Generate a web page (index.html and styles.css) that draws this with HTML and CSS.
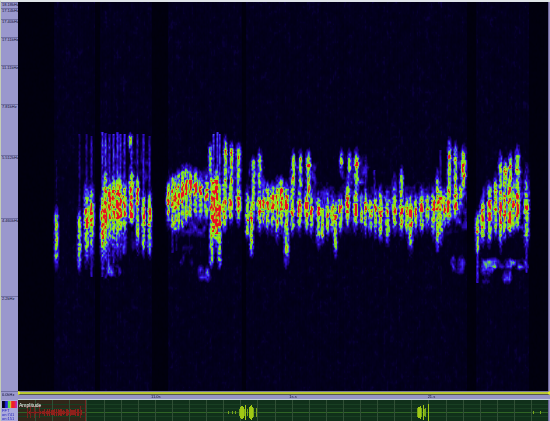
FILE: index.html
```html
<!DOCTYPE html>
<html lang="en">
<head>
<meta charset="utf-8">
<title>Spectrogram</title>
<link rel="stylesheet" href="styles.css">
</head>
<body>
<main class="app">
  <section class="spectrum">
    <div class="frequency-axis">
      <span class="tick" style="flex-grow:5">18.18kHz</span>
      <span class="tick" style="flex-grow:10">17.14kHz</span>
      <span class="tick" style="flex-grow:18">17.40kHz</span>
      <span class="tick" style="flex-grow:27">17.11kHz</span>
      <span class="tick" style="flex-grow:39">11.11kHz</span>
      <span class="tick" style="flex-grow:51">7.81kHz</span>
      <span class="tick" style="flex-grow:64">5.512kHz</span>
      <span class="tick" style="flex-grow:79">4.460kHz</span>
      <span class="tick" style="flex-grow:96">2.2kHz</span>
    </div>
    <canvas class="plot" id="spectrogram" width="530" height="389" aria-label="Spectrogram"></canvas>
    <div class="edge"></div>
  </section>
  <section class="timeline">
    <span class="origin">0.0kHz</span>
    <div class="time">
      <div class="range"></div>
      <div class="ruler"><span></span><span>11.0s</span><span>1s.s</span><span>21.s</span></div>
    </div>
  </section>
  <section class="overview">
    <div class="legend">
      <div class="palette"></div>
      <span>FFT</span>
      <span>on:741</span>
      <span>on:151</span>
    </div>
    <div class="amplitude">
      <canvas class="wave" id="waveform" width="530" height="21" aria-label="Amplitude overview"></canvas>
      <span class="caption">Amplitude</span>
    </div>
    <div class="edge"></div>
  </section>
</main>
<script src="script.js"></script>
</body>
</html>
```
FILE: styles.css
```css
* { box-sizing: border-box; }
body {
  margin: 0;
  background: #9a98cd;
  font-family: "Liberation Sans", sans-serif;
  font-size: 4px;
  line-height: 4px;
  color: #101034;
}
.app {
  height: 100vh;
  display: grid;
  grid-template-rows: 1fr 9px 21px;
  border-top: 2px solid #dfe4e8;
  border-left: 1px solid #c6cfb8;
  overflow: hidden;
}
.spectrum, .timeline, .overview {
  display: grid;
  grid-template-columns: 17px 1fr 2px;
  min-height: 0;
}
.frequency-axis {
  display: flex;
  flex-direction: column;
  min-height: 0;
  background: #9a98cd;
}
.tick {
  flex-basis: 0;
  min-height: 0;
  border-top: 1px solid #706fa2;
  padding-left: 1px;
  white-space: nowrap;
}
.plot, .wave {
  display: block;
  width: 100%;
  height: 100%;
  min-height: 0;
}
.edge { background: #9a91c6; border-left: 1px solid #6c6598; }
.timeline { grid-template-columns: 17px 1fr; }
.origin { padding: 1px; border-top: 1px solid #706fa2; }
.time { display: grid; grid-template-rows: 4px 5px; }
.range {
  background: #b9c832;
  border-top: 1px solid #77759f;
  border-bottom: 1px solid #55584d;
  border-left: 2px solid #e2ec28;
  border-right: 2px solid #e2ec28;
}
.ruler {
  display: grid;
  grid-template-columns: 25% 26% 26% 23%;
  border-bottom: 1px solid #c5d4dd;
  background: #9694c5;
}
.legend {
  display: flex;
  flex-direction: column;
  padding: 1px 1px 0;
  background: #aaa9dd;
  color: #2020bb;
}
.palette {
  flex: 0 0 7px;
  margin-bottom: 1px;
  background: linear-gradient(90deg, #05051a 0 15%, #2622e6 25% 35%, #55d846 43% 50%, #d4c634 56%, #ee2228 65% 80%, #ba2ad0);
}
.amplitude { position: relative; min-width: 0; }
.caption { position: absolute; top: 3px; left: 1px; color: #ffffff; font-size: 5px; }
```
FILE: script.js
```js
// Small seeded generator keeps the signal texture stable between paints.
let seed = 7351;
function random() {
  seed = (seed * 1664525 + 1013904223) >>> 0;
  return seed / 4294967296;
}

const LEFT = 18;
const TOP = 2;

// x, half width, outer top, strong top, peak top, peak bottom, strong bottom, outer bottom
const pulses = [
  [56,1,205,215,0,0,256,270],[79,1,207,216,0,0,260,272],
  [86,2,180,197,208,228,245,266],[91,2,180,194,203,225,236,265],
  [102,1,190,198,205,238,247,268],[105,2,160,177,187,228,246,265],
  [109,2,172,185,192,218,230,258],[113,2,170,183,190,220,228,262],
  [117,2,170,184,190,218,228,258],[120,2,170,185,193,217,226,255],
  [124,2,176,188,196,216,224,245],
  [130,1,132,136,0,0,145,152],[131,2,163,174,181,217,221,226],[137,1,173,181,188,204,234,252],
  [143,1,188,197,207,225,244,256],[149,1,186,198,208,226,246,258],
  [168,1,178,187,192,204,214,228],[172,1,172,180,189,207,226,233],
  [175,1,172,179,187,208,228,234],[178,1,168,175,186,204,226,233],
  [182,1,164,172,180,202,224,230],[186,2,163,172,180,194,217,225],
  [190,1,164,174,180,192,214,222],[195,2,167,175,182,195,211,220],
  [200,2,170,180,186,197,210,222],[206,2,172,182,189,200,210,224],
  [210,1,142,149,0,0,170,180],[211,1,170,180,201,210,262,268],
  [213,2,170,179,182,231,236,245],[216,2,165,176,180,233,238,250],
  [219,1,172,186,201,225,260,270],[224,2,170,184,200,218,224,232],
  [225,1,134,145,150,154,190,215],[231,1,140,148,152,155,202,216],
  [230,2,178,190,199,209,216,226],[238,2,140,150,0,0,170,215],[238,2,178,190,196,210,215,226],
  [247,1,185,196,214,220,232,240],[251,1,192,204,210,218,248,258],
  [253,1,155,161,0,0,203,233],[259,2,148,160,0,0,176,212],
  [259,2,185,195,200,214,222,234],[263,1,184,195,200,208,219,231],
  [267,2,180,190,197,209,221,234],[272,2,180,188,195,208,219,234],
  [277,2,177,188,194,210,229,242],[281,2,175,182,187,211,220,234],
  [286,2,180,189,195,208,252,267],[292,2,165,177,208,215,226,236],
  [293,1,149,158,0,0,178,190],[299,2,180,196,201,216,222,235],
  [300,1,148,158,0,0,186,196],[308,2,148,158,164,166,194,211],
  [306,2,180,195,202,216,224,234],[311,1,185,198,206,214,227,237],
  [318,2,190,200,207,215,235,248],[322,1,198,209,0,0,235,244],
  [327,1,185,203,209,217,226,239],[332,2,190,201,206,215,225,234],
  [335,1,195,205,214,219,244,257],[340,2,190,199,205,212,224,235],
  [341,1,148,158,0,0,163,175],[347,2,177,188,195,212,221,230],
  [349,1,149,158,0,0,168,179],[355,2,185,194,203,215,222,233],
  [356,2,147,158,162,165,180,201],[361,1,190,200,0,0,219,231],
  [365,1,184,198,202,209,224,237],[370,2,194,202,209,216,224,235],
  [375,1,188,200,204,211,226,239],[380,2,184,195,207,216,230,243],
  [387,2,187,199,207,216,234,245],[394,2,174,193,204,214,223,235],
  [401,1,166,175,0,0,196,230],[401,2,187,200,205,213,224,237],
  [406,1,194,202,207,214,225,236],[410,2,192,200,206,226,240,254],
  [415,1,192,201,207,214,225,235],[421,2,184,196,203,211,225,235],
  [427,2,186,196,204,209,220,231],[433,2,184,196,200,210,226,239],
  [437,1,168,181,199,211,239,253],[440,2,180,192,197,210,230,246],
  [444,1,184,196,205,212,219,231],[449,1,137,147,155,158,200,217],
  [448,2,180,189,201,216,219,227],[455,1,141,151,157,160,191,206],
  [455,2,178,188,194,209,213,221],[460,1,180,190,0,0,204,212],
  [463,2,144,153,160,176,183,201],[477,1,210,218,227,232,249,256],
  [482,2,196,205,209,228,236,246],[489,2,180,189,200,220,233,247],
  [495,1,173,184,190,214,228,238],[500,1,150,162,202,223,235,251],
  [504,1,163,174,195,215,231,241],[509,2,171,183,187,228,230,237],
  [505,2,158,166,168,171,179,201],[510,1,150,159,165,168,181,198],
  [517,2,144,155,169,174,184,199],[517,2,178,187,193,216,225,232],
  [513,1,174,187,201,211,224,234],[526,2,165,192,199,213,235,250]
];

// Faint vertical traces above and below the main calls: x, top, bottom, strength.
const traces = [
  [56,160,200,.22],[79,134,205,.28],[86,134,195,.32],[91,136,195,.36],
  [102,132,190,.42],[105,133,178,.46],[109,134,185,.4],[113,134,184,.44],
  [117,132,184,.46],[120,134,185,.42],[124,134,190,.42],[131,134,170,.44],
  [137,134,182,.36],[143,134,197,.42],[149,136,197,.38],
  [213,134,180,.44],[217,132,178,.46],[219,134,182,.46],
  [91,236,276,.38],[102,240,276,.42],[108,228,268,.42],[113,228,262,.38],
  [172,228,252,.34],[176,228,250,.26],[189,222,262,.2],[477,240,282,.42],
  [526,240,272,.4],[440,150,185,.34],[365,160,195,.36],[374,170,200,.34]
];

// Quiet spread and low-frequency echoes: left, right, top, bottom, strength.
const haze = [
  [100,127,128,205,.32],[128,151,130,205,.28],[99,122,260,283,.52],
  [84,95,130,205,.22],[84,95,240,274,.32],
  [100,128,215,272,.42],[128,151,215,265,.3],
  [165,230,155,230,.4],[207,224,130,195,.3],[224,242,136,232,.42],
  [196,212,261,285,.55],[168,208,205,243,.38],[176,195,235,276,.28],
  [245,268,145,245,.38],[262,470,172,245,.42],[288,318,148,200,.38],
  [338,370,146,200,.42],[443,468,138,215,.4],[448,468,250,278,.44],
  [478,528,170,250,.42],[495,524,146,200,.44],[477,530,255,272,.56],
  [478,496,256,276,.48],[480,491,266,287,.52],[500,513,264,287,.52]
];
const silences = [[18,53],[95,99],[152,167],[242,245],[467,475],[529,548]];

function pulseLevel(p, x, y) {
  const distance = Math.abs(x - p[0]);
  if (distance > 4 || y < p[2] - 3 || y > p[7] + 3) return 0;
  let level;
  if (p[4] && y >= p[4] && y <= p[5]) level = .96;
  else if (y >= p[3] && y <= p[6]) level = .72;
  else if (y < p[3]) level = .26 + .4 * (y - p[2]) / Math.max(1, p[3] - p[2]);
  else level = .26 + .4 * (p[7] - y) / Math.max(1, p[7] - p[6]);
  const falloff = p[1] === 2 ? [1, .91, .68, .46, .25] : [1, .86, .56, .32, .15];
  return Math.max(0, level) * falloff[distance];
}

function color(v) {
  const stops = [[0,0,0,8],[.15,3,0,32],[.3,31,5,135],[.44,58,25,249],[.53,78,125,210],[.6,109,216,45],[.77,165,235,20],[.85,197,130,25],[.92,228,20,36],[1.3,244,0,36]];
  for (let i = 1; i < stops.length; i++) {
    if (v <= stops[i][0]) {
      const a = stops[i - 1], b = stops[i];
      const t = (v - a[0]) / (b[0] - a[0]);
      return [1,2,3].map(n => a[n] + (b[n] - a[n]) * t);
    }
  }
  return [244,0,36];
}

// Value noise whose cells are sx by sy pixels, blended between cell corners.
function noiseField(w, h, sx, sy) {
  const cols = Math.ceil(w / sx) + 2;
  const rows = Math.ceil(h / sy) + 2;
  const cells = Array.from({length: cols * rows}, () => random());
  return (x, y) => {
    const gx = Math.floor(x / sx), gy = Math.floor(y / sy);
    const tx = x / sx - gx, ty = y / sy - gy;
    const at = (i, j) => cells[(gy + j) * cols + gx + i];
    return (at(0,0) * (1 - tx) + at(1,0) * tx) * (1 - ty)
      + (at(0,1) * (1 - tx) + at(1,1) * tx) * ty;
  };
}

function drawSpectrogram() {
  const canvas = document.getElementById("spectrogram");
  const ctx = canvas.getContext("2d");
  const w = canvas.width, h = canvas.height;
  const image = ctx.createImageData(w, h);
  const columns = Array.from({length: w}, () => random());
  const blobs = noiseField(w, h, 3, 5);
  const grain = noiseField(w, h, 1.4, 2.2);
  for (let py = 0; py < h; py++) {
    for (let px = 0; px < w; px++) {
      const x = px + LEFT, y = py + TOP;
      const n = grain(px, py);
      const b = blobs(px, py);
      const quiet = silences.some(s => x >= s[0] && x <= s[1]);
      let v = quiet ? .02 + n * .035 : .05 + b * .07 + n * .06 + columns[px] * .025;
      if (!quiet) {
        for (const a of haze) {
          if (x >= a[0] && x <= a[1] && y >= a[2] && y <= a[3]) {
            const dy = Math.min(y - a[2], a[3] - y) / ((a[3] - a[2]) / 2);
            const dx = Math.min(x - a[0], a[1] - x) + 1;
            const edge = Math.min(1, dy * 1.5) * Math.min(1, dx / 5);
            v = Math.max(v, a[4] * edge * (b * 1.05 + n * .35));
          }
        }
        for (const t of traces) {
          const distance = Math.abs(x - t[0]);
          if (distance < 3 && y >= t[1] && y <= t[2]) {
            v = Math.max(v, t[3] * [1, .75, .35][distance] * (.55 + n * .5 + b * .3));
          }
        }
      }
      let first = 0, second = 0;
      for (const p of pulses) {
        const level = pulseLevel(p, x, y);
        if (level > first) { second = first; first = level; }
        else if (level > second) second = level;
      }
      if (first) {
        const level = Math.min(.97, first + second * .08);
        v = Math.max(v, level * (.5 + n * .74 + b * .14));
      }
      const rgb = color(v), i = (py * w + px) * 4;
      image.data[i] = rgb[0];
      image.data[i + 1] = rgb[1];
      image.data[i + 2] = rgb[2];
      image.data[i + 3] = 255;
    }
  }
  ctx.putImageData(image, 0, 0);
}

function drawWaveform() {
  const canvas = document.getElementById("waveform");
  const ctx = canvas.getContext("2d");
  function bar(x, y, w, h, fill) {
    ctx.fillStyle = fill;
    ctx.fillRect(x, y, w, h);
  }
  bar(0, 0, 530, 21, "#10301a");
  bar(0, 0, 68, 21, "#302619");
  for (const y of [4, 8, 16]) bar(0, y, 530, 1, "#183f22");
  bar(0, 12, 530, 1, "#2f6425");
  for (let i = 1; i < 31; i++) bar(Math.round(i * 17.1), 0, 1, 21, "#304f35");
  bar(67, 0, 1, 21, "#6e2420");
  for (let x = 9; x < 64; x++) {
    const height = Math.floor(random() * (x > 20 ? 4 : 2));
    bar(x, 12 - height, 1, height * 2 + 1, "#8e211b");
  }
  for (const x of [9, 12, 16, 21, 62]) bar(x, 6, 1, 12, "#74221c");
  const bursts = [[210,1],[214,1],[217,1],[221,3],[222,5],[223,6],[224,6],[225,5],[226,3],[227,7],[229,3],[231,5],[232,6],[233,7],[234,5],[235,4],[238,4],[399,4],[400,5],[401,5],[402,6],[403,4],[405,7],[406,3],[407,4],[410,8],[515,1],[522,1]];
  for (const [x, r] of bursts) {
    bar(x, 12 - r, 1, r * 2 + 1, r > 4 ? "#a0c814" : "#78a51b");
  }
}

drawSpectrogram();
drawWaveform();
```
